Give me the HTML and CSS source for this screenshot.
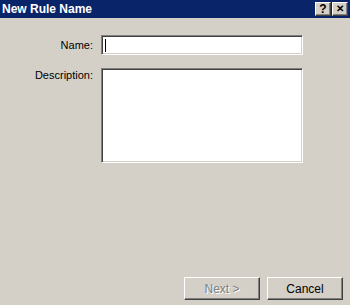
FILE: index.html
```html
<!DOCTYPE html>
<html>
<head>
    <link rel="stylesheet" href="styles.css">
</head>
<body>
    <div class="titlebar">
        <span class="title">New Rule Name</span>
        <div class="title-buttons">
            <div class="tbtn">?</div>
            <div class="tbtn close">&#x2715;</div>
        </div>
    </div>
    <div class="form">
        <label class="label">Name:</label>
        <div class="field name-field"><span class="caret"></span></div>
        <label class="label label-top">Description:</label>
        <div class="field desc-field"></div>
    </div>
    <div class="footer">
        <div class="button disabled">Next &gt;</div>
        <div class="button">Cancel</div>
    </div>
</body>
</html>
```

FILE: styles.css
```css
:root {
    --face: #d4d0c8;
    --shadow: #808080;
    --dark: #404040;
    --light: #ffffff;
    --title-bg: #0a246a;
}
html, body {
    margin: 0;
    height: 305px;
}
body {
    display: flex;
    flex-direction: column;
    background: var(--face);
    font-family: "Liberation Sans", Arial, sans-serif;
    font-size: 11px;
    color: #000;
}
.titlebar {
    height: 18px;
    background: var(--title-bg);
    display: flex;
    align-items: center;
    justify-content: space-between;
    padding: 0 2px 0 2px;
}
.title {
    color: #fff;
    font-weight: bold;
    font-size: 12px;
}
.title-buttons {
    display: flex;
    gap: 1px;
}
.tbtn {
    width: 14px;
    height: 12px;
    background: var(--face);
    border: 1px solid;
    border-color: var(--light) var(--dark) var(--dark) var(--light);
    box-shadow: inset -1px -1px var(--shadow);
    display: flex;
    align-items: center;
    justify-content: center;
    font-weight: bold;
    font-size: 12px;
    line-height: 1;
}
.close {
    font-size: 10px;
}
.form {
    display: grid;
    grid-template-columns: 93px 202px;
    column-gap: 8px;
    row-gap: 13px;
    padding-top: 17px;
}
.label {
    text-align: right;
    align-self: center;
}
.label-top {
    align-self: start;
    padding-top: 1px;
}
.field {
    box-sizing: border-box;
    background: #fff;
    border: 1px solid;
    border-color: var(--shadow) var(--light) var(--light) var(--shadow);
    box-shadow: inset 1px 1px var(--dark), inset -1px -1px var(--face);
}
.name-field {
    height: 20px;
    padding: 3px 0 0 3px;
}
.caret {
    display: block;
    width: 1px;
    height: 13px;
    background: #000;
}
.desc-field {
    height: 95px;
}
.footer {
    margin-top: auto;
    display: flex;
    justify-content: flex-end;
    gap: 7px;
    padding: 0 7px 5px 0;
}
.button {
    box-sizing: border-box;
    width: 76px;
    height: 23px;
    border: 1px solid;
    border-color: var(--light) var(--dark) var(--dark) var(--light);
    box-shadow: inset -1px -1px var(--shadow);
    display: flex;
    align-items: center;
    justify-content: center;
    font-size: 12px;
}
.disabled {
    color: var(--shadow);
    text-shadow: 1px 1px var(--light);
}
```
